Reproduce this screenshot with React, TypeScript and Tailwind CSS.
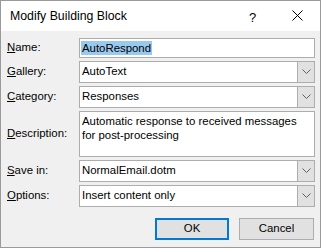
import React from "react";

const font = { fontFamily: '"Liberation Sans", Arial, sans-serif' };

function Label({ k, rest }: { k: string; rest: string }) {
  return (
    <span className="text-[11.4px] text-black">
      <span className="underline underline-offset-[1px]">{k}</span>
      {rest}
    </span>
  );
}

function Chevron() {
  return (
    <svg width="9" height="6" viewBox="0 0 9 6">
      <path d="M0.5 0.5 L4.5 4.5 L8.5 0.5" fill="none" stroke="#606060" strokeWidth="1" />
    </svg>
  );
}

function Combo({ value }: { value: string }) {
  return (
    <div className="flex h-[22px] border border-[#adadad] bg-white">
      <div className="flex-1 flex items-center pl-[2px] text-[11.4px] text-black">{value}</div>
      <div className="w-[17px] bg-[#e1e1e1] border-l border-[#adadad] flex items-center justify-center">
        <Chevron />
      </div>
    </div>
  );
}

export default function App() {
  return (
    <div style={font} className="w-[321px] h-[248px] border border-[#9a9a9a] bg-[#f0f0f0] flex flex-col">
      <div className="h-[30px] bg-white flex items-center pl-[9px] relative">
        <span className="text-[12.3px] text-black">Modify Building Block</span>
        <span className="absolute left-[248px] top-[7px] text-[13px] text-black">?</span>
        <svg className="absolute left-[291px] top-[9px]" width="11" height="11" viewBox="0 0 11 11">
          <path d="M0.5 0.5 L10.5 10.5 M10.5 0.5 L0.5 10.5" stroke="#000" strokeWidth="1" />
        </svg>
      </div>
      <div className="flex-1 pl-[6px] pr-[5px] pt-[7px]">
        <div className="grid grid-cols-[72px_1fr] gap-y-[3px] items-center">
          <Label k="N" rest="ame:" />
          <div className="h-[20px] border border-[#adadad] bg-white flex items-center pl-[1px]">
            <span className="bg-[#99c9ef] text-[11.4px] text-black px-[1px] leading-[14px]">AutoRespond</span>
          </div>
          <Label k="G" rest="allery:" />
          <Combo value="AutoText" />
          <Label k="C" rest="ategory:" />
          <Combo value="Responses" />
          <Label k="D" rest="escription:" />
          <div className="h-[46px] border border-[#adadad] bg-white pl-[2px] pt-[2px] text-[11.4px] leading-[14px] text-black">
            Automatic response to received messages
            <br />
            for post-processing
          </div>
          <Label k="S" rest="ave in:" />
          <Combo value="NormalEmail.dotm" />
          <Label k="O" rest="ptions:" />
          <Combo value="Insert content only" />
        </div>
        <div className="flex justify-end gap-[10px] mt-[11px] pr-[1px]">
          <button className="w-[74px] h-[22px] border-2 border-[#0078d7] bg-[#e1e1e1] text-[11.4px] text-black">OK</button>
          <button className="w-[75px] h-[22px] border border-[#adadad] bg-[#e1e1e1] text-[11.4px] text-black">Cancel</button>
        </div>
      </div>
    </div>
  );
}
